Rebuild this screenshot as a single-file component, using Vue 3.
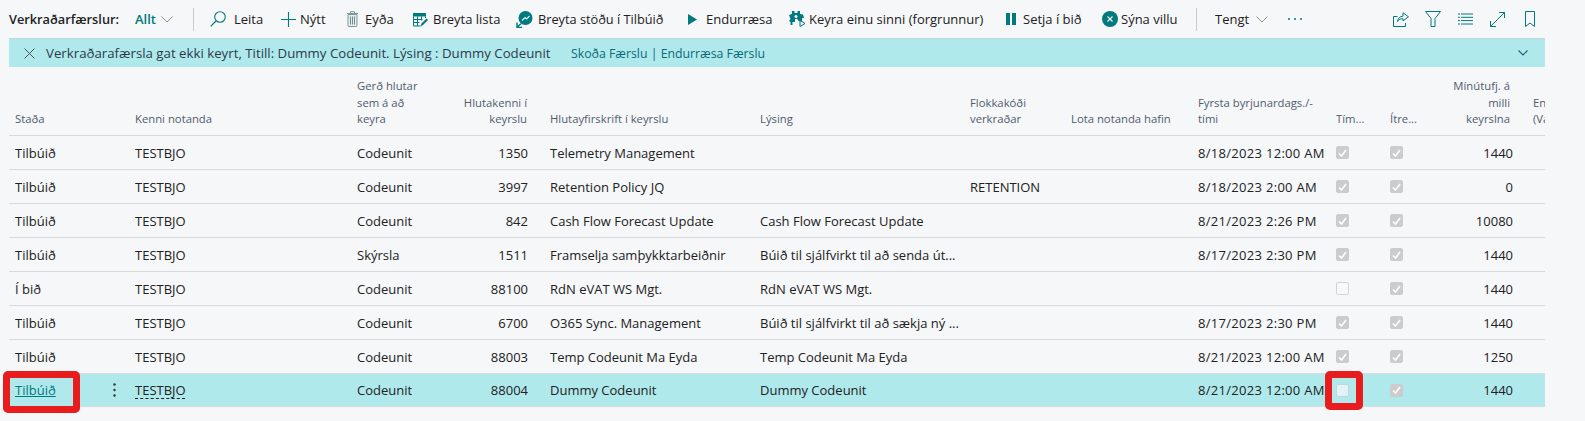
<script setup>
const rows = [
  ['Tilbúið','TESTBJO','Codeunit','1350','Telemetry Management','','','8/18/2023 12:00 AM',true,true,'1440'],
  ['Tilbúið','TESTBJO','Codeunit','3997','Retention Policy JQ','','RETENTION','8/18/2023 2:00 AM',true,true,'0'],
  ['Tilbúið','TESTBJO','Codeunit','842','Cash Flow Forecast Update','Cash Flow Forecast Update','','8/21/2023 2:26 PM',true,true,'10080'],
  ['Tilbúið','TESTBJO','Skýrsla','1511','Framselja samþykktarbeiðnir','Búið til sjálfvirkt til að senda út...','','8/17/2023 2:30 PM',true,true,'1440'],
  ['Í bið','TESTBJO','Codeunit','88100','RdN eVAT WS Mgt.','RdN eVAT WS Mgt.','','',false,true,'1440'],
  ['Tilbúið','TESTBJO','Codeunit','6700','O365 Sync. Management','Búið til sjálfvirkt til að sækja ný ...','','8/17/2023 2:30 PM',true,true,'1440'],
  ['Tilbúið','TESTBJO','Codeunit','88003','Temp Codeunit Ma Eyda','Temp Codeunit Ma Eyda','','8/21/2023 12:00 AM',true,true,'1250'],
  ['Tilbúið','TESTBJO','Codeunit','88004','Dummy Codeunit','Dummy Codeunit','','8/21/2023 12:00 AM',false,true,'1440'],
]
</script>

<template>
  <div class="page">
    <div class="toolbar">
      <span class="title">Verkraðarfærslur:</span>
      <span class="view">Allt</span>
      <svg class="chev" width="12" height="7" viewBox="0 0 12 7"><path d="M.5.5l5.500 5.500 5.500-5.500" fill="none" stroke="#8a9197"/></svg>
      <i class="sep s1"></i>
      <span class="item i-search"><svg width="16" height="16" viewBox="0 0 16 16"><circle cx="10" cy="6" r="5.300" fill="none" stroke="#00797f" stroke-width="1.100"/><path d="M6 10L.7 15.300" stroke="#00797f" stroke-width="1.200"/></svg>Leita</span>
      <span class="item i-new"><svg width="15" height="15" viewBox="0 0 15 15"><path d="M7.500 0v15M0 7.500h15" stroke="#00797f" stroke-width="1.100"/></svg>Nýtt</span>
      <span class="item i-del"><svg width="11" height="16" viewBox="0 0 11 16"><path d="M1 3.500h9v11a1 1 0 0 1-1 1H2a1 1 0 0 1-1-1z" fill="#e4ecec" stroke="#7a9a9c"/><path d="M0 2.500h11M3.500 2.500V.7h4v1.800" fill="none" stroke="#7a9a9c"/><path d="M3.500 5.500v8M5.500 5.500v8M7.500 5.500v8" stroke="#6f8f92"/></svg>Eyða</span>
      <span class="item i-edit"><svg width="15" height="15" viewBox="0 0 15 15"><path d="M0 1h13v3.500H0z" fill="#00797f"/><path d="M.5 4.500v9.500h7M12.500 4.500V6M.5 7.500h9M.5 10.500h6M4.500 4.500v9.500M8.500 4.500v4" fill="none" stroke="#00797f"/><path d="M7.500 14.500l1-3 5-5 1.500 1.500-5 5z" fill="#00797f"/></svg>Breyta lista</span>
      <span class="item i-status"><svg width="17" height="17" viewBox="0 0 17 17"><circle cx="9.500" cy="7" r="7" fill="#00797f"/><path d="M6 9.500l3-3 1.500 1.500 3-3" fill="none" stroke="#e6f2f3" stroke-width="1.100"/><path d="M.8 16.300l4.500-3.800M1 11.500v5h5" fill="none" stroke="#00797f" stroke-width="1.400"/></svg>Breyta stöðu í Tilbúið</span>
      <span class="item i-play"><svg width="9" height="11" viewBox="0 0 9 11"><path d="M0 0l9 5.500-9 5.500z" fill="#00797f"/></svg>Endurræsa</span>
      <span class="item i-run"><svg width="17" height="16" viewBox="0 0 17 16"><path d="M3 0h2.500v2h3V0H11v3l3 .5 1 3.500h-2v3H9.500l-1-2H6v3H3.500v3H1.500v-3L0 10l1.500-2L0 4l3-1z" fill="#00797f"/><circle cx="7" cy="5.500" r="1.500" fill="#f6f7f9"/><path d="M11 9.500l5 3-5 3z" fill="#f6f7f9" stroke="#00797f"/></svg>Keyra einu sinni (forgrunnur)</span>
      <span class="item i-pause"><svg width="10" height="12" viewBox="0 0 10 12"><path d="M0 0h4v12H0zM6 0h4v12H6z" fill="#00797f"/></svg>Setja í bið</span>
      <span class="item i-err"><svg width="16" height="16" viewBox="0 0 16 16"><circle cx="8" cy="8" r="8" fill="#00797f"/><path d="M5.500 5.500l5 5M10.500 5.500l-5 5" stroke="#fff" stroke-width="1.100"/></svg>Sýna villu</span>
      <i class="sep"></i>
      <span class="item i-rel">Tengt</span>
      <svg class="chev c2" width="12" height="7" viewBox="0 0 12 7"><path d="M.5.500l5.500 5.500 5.500-5.500" fill="none" stroke="#8a9197"/></svg>
      <span class="dots"><b></b><b></b><b></b></span>
      <span class="right">
        <svg width="16" height="15" viewBox="0 0 16 15"><path d="M4.500 4.500H.5v10h12V11" fill="none" stroke="#00797f"/><path d="M10 .8l5.500 4-5.500 4V6.700c-2.500 0-4 .6-5.500 2.800.3-3 2.200-5.200 5.500-5.300z" fill="none" stroke="#00797f"/></svg>
        <svg width="16" height="16" viewBox="0 0 16 16"><path d="M.5.500h15L10 7.500v8H6V7.500z" fill="none" stroke="#00797f"/></svg>
        <svg class="g1" width="15" height="12" viewBox="0 0 15 12"><path d="M0 1h2M3 1h12M0 4.300h2M3 4.300h12M0 7.600h2M3 7.600h12M0 11h2M3 11h12" stroke="#00797f"/></svg>
        <svg class="g1" width="15" height="15" viewBox="0 0 15 15"><path d="M14.500.500L.5 14.500M9 .5h5.500V6M.5 9v5.500H6" fill="none" stroke="#00797f"/></svg>
        <svg class="g2" width="10" height="16" viewBox="0 0 10 16"><path d="M.5.500h9v15L5 12 .5 15.500z" fill="none" stroke="#00797f"/></svg>
      </span>
    </div>

    <div class="banner">
      <svg width="11" height="11" viewBox="0 0 11 11"><path d="M.5.500l10 10M10.500.500l-10 10" stroke="#4a5560"/></svg>
      <span class="msg">Verkraðarafærsla gat ekki keyrt, Titill: Dummy Codeunit. Lýsing : Dummy Codeunit</span>
      <span class="links">Skoða Færslu | Endurræsa Færslu</span>
      <svg class="bchev" width="10" height="6" viewBox="0 0 10 6"><path d="M.5.500L5 5l4.500-4.500" fill="none" stroke="#1f5f70" stroke-width="1.100"/></svg>
    </div>

    <div class="table">
      <div class="row head">
        <span>Staða</span><span class="c-menu"></span>
        <span>Kenni notanda</span>
        <span>Gerð hlutar<br>sem á að<br>keyra</span>
        <span class="c-id">Hlutakenni í<br>keyrslu</span>
        <span>Hlutayfirskrift í keyrslu</span>
        <span>Lýsing</span>
        <span>Flokkakóði<br>verkraðar</span>
        <span>Lota notanda hafin</span>
        <span>Fyrsta byrjunardags./-<br>tími</span>
        <span>Tím...</span>
        <span>Ítre...</span>
        <span class="c-min">Mínútufj. á<br>milli<br>keyrslna</span>
        <span class="c-end">En<br>(Va</span>
      </div>
      <div v-for="(r, i) in rows" :key="i" class="row body" :class="{ sel: i === 7 }">
        <span><a v-if="i === 7" class="link">{{ r[0] }}</a><template v-else>{{ r[0] }}</template></span>
        <span class="c-menu"><svg v-if="i === 7" width="3" height="14" viewBox="0 0 3 14"><circle cx="1.500" cy="1.500" r="1.200"/><circle cx="1.500" cy="7" r="1.200"/><circle cx="1.500" cy="12.500" r="1.200"/></svg></span>
        <span><span :class="{ dashed: i === 7 }">{{ r[1] }}</span></span>
        <span>{{ r[2] }}</span>
        <span class="c-id">{{ r[3] }}</span>
        <span>{{ r[4] }}</span>
        <span>{{ r[5] }}</span>
        <span>{{ r[6] }}</span>
        <span></span>
        <span class="c-date">{{ r[7] }}</span>
        <span><i class="cb" :class="{ on: r[8], light: i === 7 }"><svg v-if="r[8]" width="9" height="8" viewBox="0 0 9 8"><path d="M1 4.500l2.500 2.500L8 1" fill="none" stroke="#fff" stroke-width="1.600"/></svg></i></span>
        <span><i class="cb on"><svg width="9" height="8" viewBox="0 0 9 8"><path d="M1 4.500l2.500 2.500L8 1" fill="none" stroke="#fff" stroke-width="1.600"/></svg></i></span>
        <span class="c-min">{{ r[10] }}</span>
        <span class="c-end"></span>
      </div>
      <i class="mark-a"></i>
      <i class="mark-b"></i>
    </div>
  </div>
</template>

<style>
html, body { margin: 0; background: #f6f7f9; }
</style>

<style scoped>
.page { width: 1585px; height: 421px; overflow: hidden; background: #f6f7f9; font-family: "Open Sans", "Liberation Sans", sans-serif; color: #212121; }
.toolbar { height: 38px; margin: 0 50px 0 9px; display: flex; align-items: center; font-size: 13px; white-space: nowrap; }
.title { width: 126px; flex: none; font-size: 12.75px; font-weight: 600; }
.view { width: 26px; flex: none; font-weight: 600; color: #00797f; }
.sep { width: 1px; height: 23px; background: #c8ccd0; flex: none; }
.s1 { margin-left: 20px; }
.item { display: flex; align-items: center; flex: none; }
.i-search { margin-left: 16px; width: 71px; gap: 8px; }
.i-new { width: 66px; gap: 4px; }
.i-del { width: 66px; gap: 7px; }
.i-edit { width: 103px; gap: 5px; }
.i-status { width: 172px; gap: 5px; font-size: 12.75px; }
.i-play { width: 101px; gap: 9px; }
.i-run { width: 217px; gap: 3px; }
.i-pause { width: 96px; gap: 7px; }
.i-err { width: 94px; gap: 3px; }
.i-rel { margin-left: 18px; width: 41px; }
.dots { display: flex; gap: 4px; margin-left: 20px; }
.dots b { width: 2px; height: 2px; background: #00797f; border-radius: 50%; }
.right { margin-left: auto; display: flex; align-items: center; gap: 16px; }
.g1 { margin-left: 1px; }
.g2 { margin-left: 4px; }

.banner { height: 29px; margin: 0 40px 0 9px; background: #b0e9ec; border-top: 1px solid #c4d4dc; box-sizing: border-box; display: flex; align-items: center; padding-left: 15px; }
.msg { width: 525px; flex: none; margin-left: 11px; font-size: 13.25px; color: #2c3a4a; white-space: nowrap; }
.links { font-size: 12.3px; color: #0b6a78; white-space: nowrap; }
.bchev { margin-left: auto; margin-right: 17px; }

.table { position: relative; margin-left: 9px; width: 1536px; display: grid; grid-template-rows: 69px 34px 34px 34px 34px 34px 34px 34px 33px; }
.row { display: grid; grid-template-columns: 92px 28px 222px 93px 100px 210px 210px 101px 127px 138px 54px 56px 79px 26px; box-sizing: border-box; }
.row > span { padding: 0 6px; white-space: nowrap; box-sizing: border-box; overflow: hidden; }
.row > .c-menu { padding-left: 12px; }
.row > .c-id { text-align: right; padding-right: 16px; }
.row > .c-min { text-align: right; }
.row > .c-end { padding: 0 0 0 14px; }
.head { align-items: end; font-size: 11.3px; line-height: 16.5px; color: #505c6d; border-bottom: 1px solid #d8dadd; padding-bottom: 7.5px; }
.row.head > .c-min { padding-right: 9px; }
.row.head > .c-id { padding-right: 17px; }
.body { align-items: center; font-size: 13px; border-bottom: 1px solid #d8dadd; }
.sel { background: #b0e9ec; }
.c-date { letter-spacing: 0.3px; }
.link { color: #00797f; text-decoration: underline; }
.dashed { text-decoration: underline dashed #212121 1px; text-underline-offset: 3px; }
.c-menu svg { fill: #333; display: block; }
.cb { display: block; width: 13px; height: 13px; border-radius: 2px; box-sizing: border-box; border: 1px solid #d2d4d6; background: #f8f9fa; }
.cb.on { background: #cccccc; border-color: #cccccc; display: flex; align-items: center; justify-content: center; }
.cb.light { background: #e0f3f6; border-color: #c9d3d8; }
.cb.on.light { background: #cccccc; border-color: #cccccc; }
.mark-a, .mark-b { position: absolute; box-sizing: border-box; border: 7px solid #e81c1c; border-radius: 5px; }
.mark-a { left: -6px; top: 304px; width: 77px; height: 42px; }
.mark-b { left: 1316px; top: 304px; width: 38px; height: 39px; }
</style>
